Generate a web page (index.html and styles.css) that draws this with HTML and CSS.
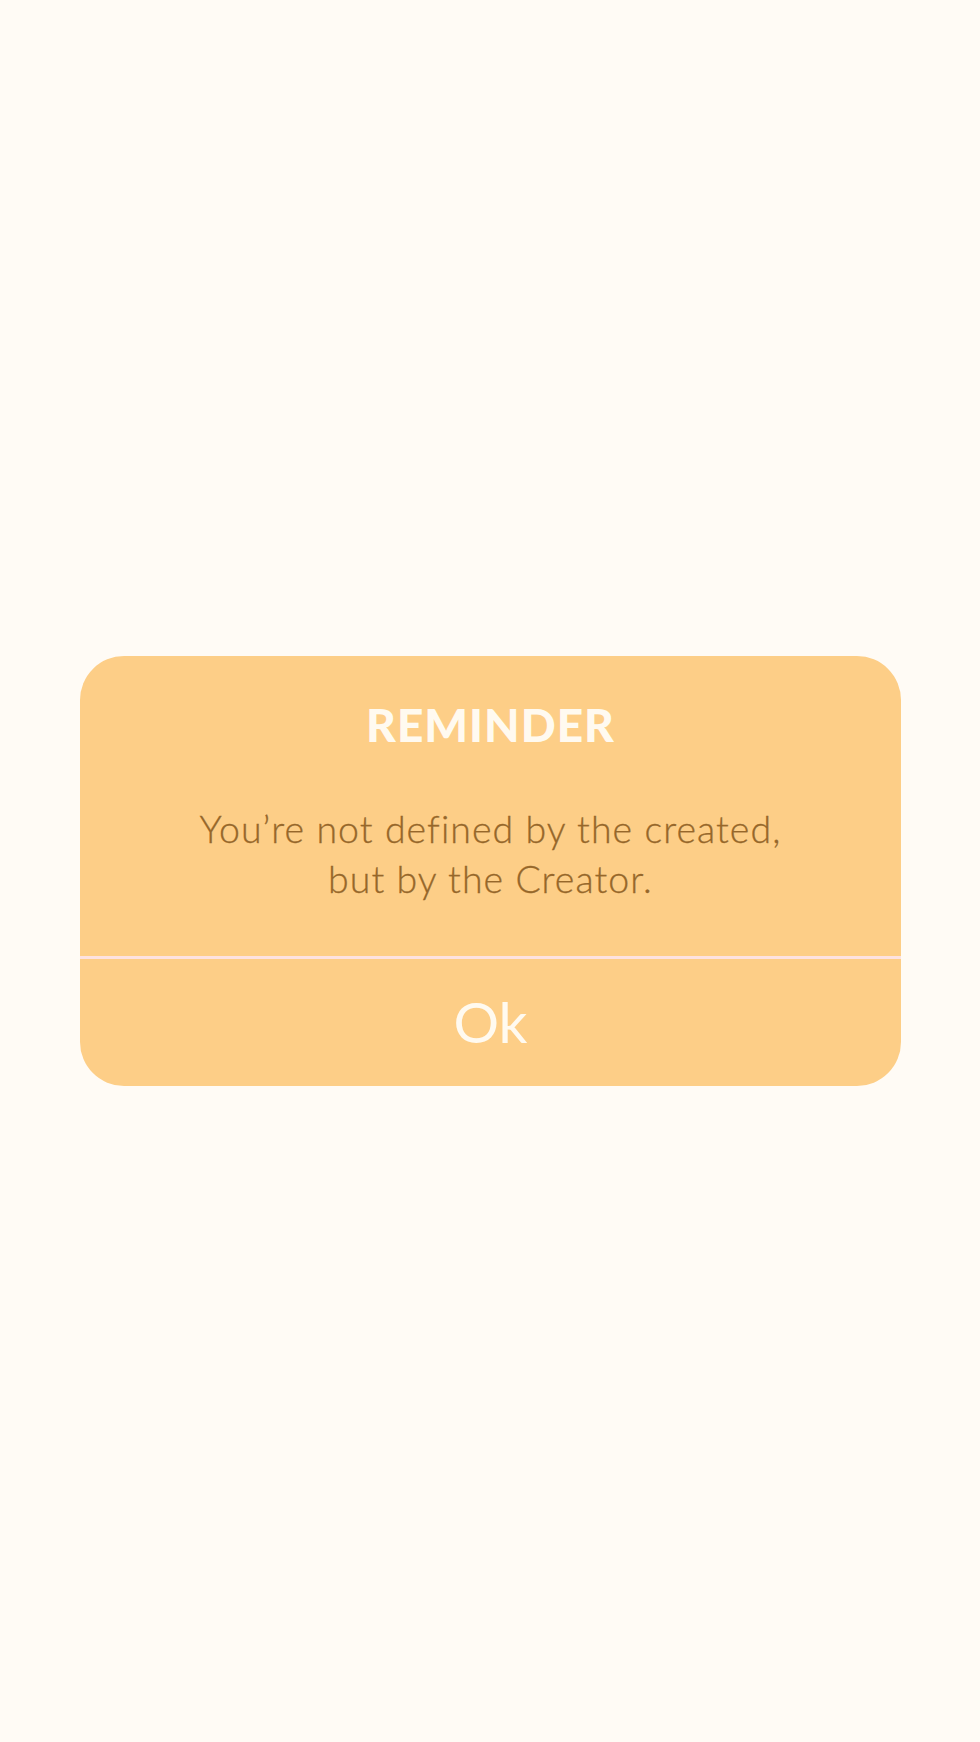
FILE: index.html
```html
<!DOCTYPE html>
<html lang="en">
<head>
<meta charset="utf-8">
<title>Reminder</title>
<link rel="stylesheet" href="styles.css">
</head>
<body>
<main class="page">
  <section class="dialog" role="dialog" aria-labelledby="dlg-title">
    <div class="dialog-body">
      <h1 class="dialog-title" id="dlg-title">REMINDER</h1>
      <p class="dialog-message">You’re not defined by the created,<br>but by the Creator.</p>
    </div>
    <div class="dialog-divider"></div>
    <button class="dialog-action" type="button">Ok</button>
  </section>
</main>
</body>
</html>
```

FILE: styles.css
```css
html, body {
  margin: 0;
  padding: 0;
}

body {
  background: #fffbf5;
  font-family: "Lato", "Liberation Sans", sans-serif;
}

.page {
  min-height: 100vh;
  display: flex;
  align-items: center;
  justify-content: center;
  padding: 0 79px 0 80px;
  box-sizing: border-box;
}

.dialog {
  width: 100%;
  background: #fdce87;
  border-radius: 44px;
  overflow: hidden;
  display: flex;
  flex-direction: column;
}

.dialog-body {
  padding: 46px 40px 52px;
  display: flex;
  flex-direction: column;
  align-items: center;
  gap: 56px;
}

.dialog-title {
  margin: 0;
  font-size: 46px;
  line-height: 46px;
  font-weight: 900;
  color: #fffaf0;
  letter-spacing: 1px;
}

.dialog-message {
  margin: 0;
  font-size: 37.5px;
  line-height: 50px;
  font-weight: 300;
  color: #96672a;
  text-align: center;
  letter-spacing: 1.05px;
  -webkit-text-stroke: 0.3px #96672a;
}

.dialog-divider {
  height: 3px;
  background: #fde2e1;
}

.dialog-action {
  height: 127px;
  border: 0;
  background: transparent;
  color: #fffaf0;
  font-family: inherit;
  font-size: 57px;
  font-weight: 400;
  line-height: 1;
  padding: 0 0 3px;
  cursor: pointer;
}
```
